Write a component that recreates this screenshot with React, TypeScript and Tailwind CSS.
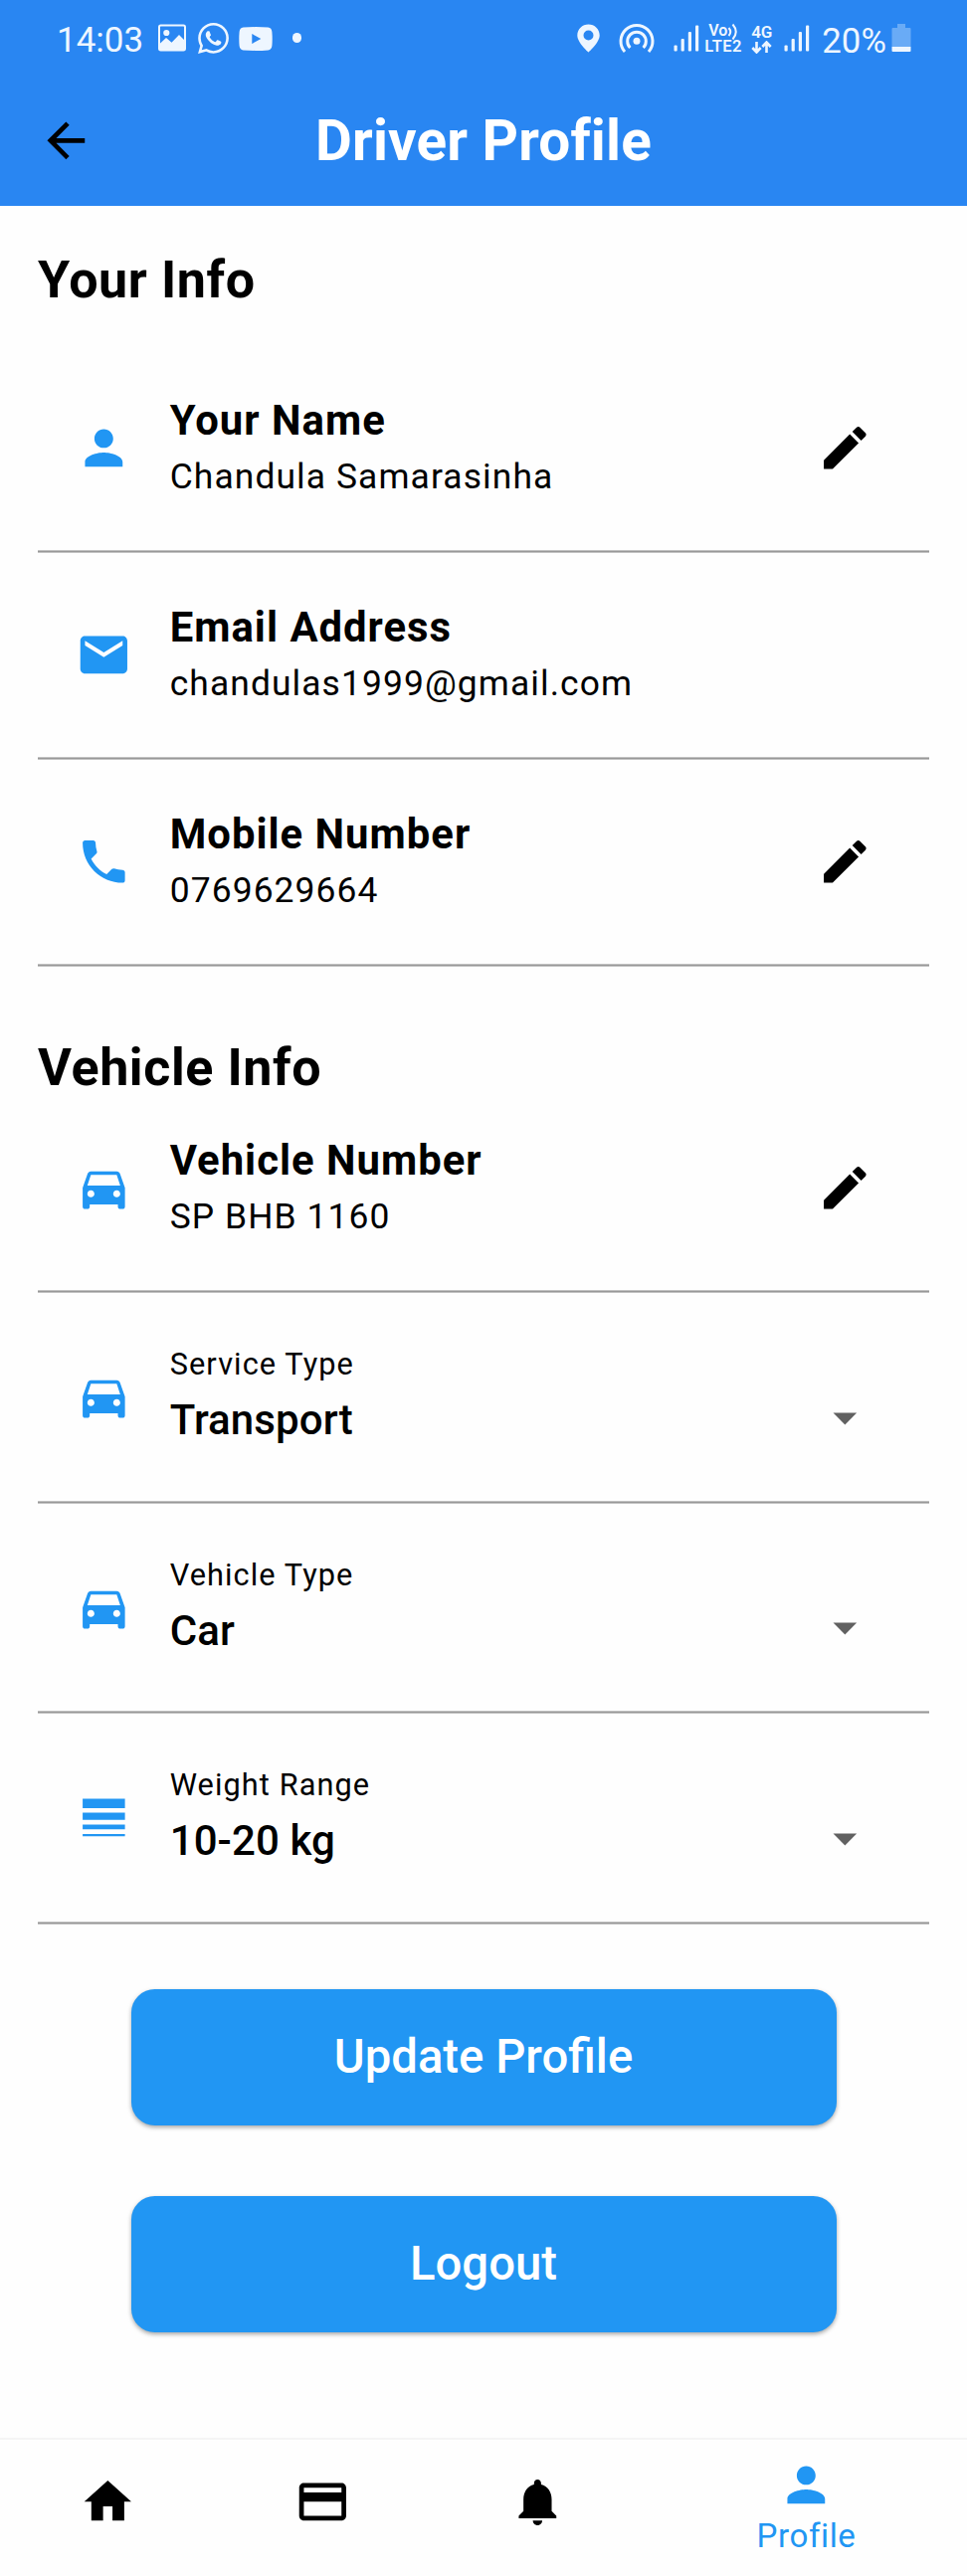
import React from "react";

type IconProps = { d: string; className?: string };

function Icon({ d, className = "" }: IconProps) {
  return (
    <svg viewBox="0 0 24 24" fill="currentColor" className={`size-[56.7px] shrink-0 ${className}`}>
      <path d={d} />
    </svg>
  );
}

const icons = {
  back: "M20 11H7.83l5.59-5.59L12 4l-8 8 8 8 1.41-1.41L7.83 13H20v-2z",
  person: "M12 12c2.21 0 4-1.79 4-4s-1.79-4-4-4-4 1.79-4 4 1.79 4 4 4zm0 2c-2.67 0-8 1.34-8 4v2h16v-2c0-2.66-5.33-4-8-4z",
  email: "M20 4H4c-1.1 0-1.99.9-1.99 2L2 18c0 1.1.9 2 2 2h16c1.1 0 2-.9 2-2V6c0-1.1-.9-2-2-2zm0 4l-8 5-8-5V6l8 5 8-5v2z",
  phone: "M6.62 10.79c1.44 2.83 3.76 5.14 6.59 6.59l2.2-2.2c.27-.27.67-.36 1.02-.24 1.12.37 2.33.57 3.57.57.55 0 1 .45 1 1V20c0 .55-.45 1-1 1-9.39 0-17-7.61-17-17 0-.55.45-1 1-1h3.5c.55 0 1 .45 1 1 0 1.25.2 2.45.57 3.57.11.35.03.74-.25 1.02l-2.2 2.2z",
  edit: "M3 17.25V21h3.75L17.81 9.94l-3.75-3.75L3 17.25zM20.71 7.04c.39-.39.39-1.02 0-1.41l-2.34-2.34c-.39-.39-1.02-.39-1.41 0l-1.83 1.83 3.75 3.75 1.83-1.83z",
  car: "M18.92 6.01C18.72 5.42 18.16 5 17.5 5h-11c-.66 0-1.21.42-1.42 1.01L3 12v8c0 .55.45 1 1 1h1c.55 0 1-.45 1-1v-1h12v1c0 .55.45 1 1 1h1c.55 0 1-.45 1-1v-8l-2.08-5.99zM6.5 16c-.83 0-1.5-.67-1.5-1.5S5.67 13 6.5 13s1.5.67 1.5 1.5S7.33 16 6.5 16zm11 0c-.83 0-1.5-.67-1.5-1.5s.67-1.5 1.5-1.5 1.5.67 1.5 1.5-.67 1.5-1.5 1.5zM5 11l1.5-4.5h11L19 11H5z",
  weight: "M3 17h18v-2H3v2zm0 3h18v-1H3v1zm0-7h18v-3H3v3zm0-9v4h18V4H3z",
  caret: "M7 10l5 5 5-5z",
  home: "M10 20v-6h4v6h5v-8h3L12 3 2 12h3v8z",
  card: "M20 4H4c-1.11 0-1.99.89-1.99 2L2 18c0 1.11.89 2 2 2h16c1.11 0 2-.89 2-2V6c0-1.11-.89-2-2-2zm0 14H4v-6h16v6zm0-10H4V6h16v2z",
  bell: "M12 22c1.1 0 2-.9 2-2h-4c0 1.1.89 2 2 2zm6-6v-5c0-3.07-1.64-5.64-4.5-6.32V4c0-.83-.67-1.5-1.5-1.5s-1.5.67-1.5 1.5v.68C7.63 5.36 6 7.92 6 11v5l-2 2v1h16v-1l-2-2z",
};

function Signal({ className = "" }: { className?: string }) {
  return (
    <svg viewBox="0 0 26 28" fill="currentColor" className={`h-7 w-[26px] shrink-0 ${className}`}>
      <rect x="0.5" y="20.5" width="3.2" height="6" rx="1" />
      <rect x="7.6" y="14" width="3.2" height="12.5" rx="1" />
      <rect x="14.8" y="7" width="3.2" height="19.5" rx="1" />
      <rect x="22" y="0.5" width="3.2" height="26" rx="1" />
    </svg>
  );
}

function StatusBar() {
  return (
    <div className="flex h-[78px] items-center pr-[56px] pl-[57px] text-[#eef6ff]">
      <span className="w-[100.5px] shrink-0 pt-[3px] text-[35px] leading-10">14:03</span>
      <svg viewBox="0 0 30 28" className="mb-[2px] h-7 w-[30px] shrink-0">
        <rect x="2" y="1.6" width="26" height="24.8" rx="1.6" fill="none" stroke="currentColor" strokeWidth="2" />
        <circle cx="9.3" cy="9" r="3.1" fill="currentColor" />
        <path d="M2 20.5l7-6.5 5.5 4.7 7.5-7.7 6 6V26H2z" fill="currentColor" />
      </svg>
      <svg viewBox="0 0 24 24" fill="currentColor" className="mb-[2px] ml-[11.5px] size-[31px] shrink-0">
        <path d="M17.472 14.382c-.297-.149-1.758-.867-2.03-.967-.273-.099-.471-.148-.67.15-.197.297-.767.966-.94 1.164-.173.199-.347.223-.644.075-.297-.15-1.255-.463-2.39-1.475-.883-.788-1.48-1.761-1.653-2.059-.173-.297-.018-.458.13-.606.134-.133.298-.347.446-.52.149-.174.198-.298.298-.497.099-.198.05-.371-.025-.52-.075-.149-.669-1.612-.916-2.207-.242-.579-.487-.5-.669-.51-.173-.008-.371-.01-.57-.01-.198 0-.52.074-.792.372-.272.297-1.04 1.016-1.04 2.479 0 1.462 1.065 2.875 1.213 3.074.149.198 2.096 3.2 5.077 4.487.709.306 1.262.489 1.694.625.712.227 1.36.195 1.871.118.571-.085 1.758-.719 2.006-1.413.248-.694.248-1.289.173-1.413-.074-.124-.272-.198-.57-.347m-5.421 7.403h-.004a9.87 9.87 0 01-5.031-1.378l-.361-.214-3.741.982.998-3.648-.235-.374a9.86 9.86 0 01-1.51-5.26c.001-5.45 4.436-9.884 9.888-9.884 2.64 0 5.122 1.03 6.988 2.898a9.825 9.825 0 012.893 6.994c-.003 5.45-4.437 9.884-9.885 9.884m8.413-18.297A11.815 11.815 0 0012.05 0C5.495 0 .16 5.335.157 11.892c0 2.096.547 4.142 1.588 5.945L.057 24l6.305-1.654a11.882 11.882 0 005.683 1.448h.005c6.554 0 11.89-5.335 11.893-11.893a11.821 11.821 0 00-3.48-8.413Z" />
      </svg>
      <svg viewBox="0 0 34 24" className="mb-px ml-[9.5px] h-6 w-[34px] shrink-0">
        <path fillRule="evenodd" fill="currentColor" d="M4.5.6Q17-.4 29.5.6 33 1 33.4 5q.6 7 0 14-.4 4-3.900 4.400-12.500 1-25 0Q1 23 .6 19 0 12 .6 5 1 1 4.500.6zM13.300 7v10l9-5z" />
      </svg>
      <span className="mb-[2px] ml-[20px] size-[9.5px] shrink-0 rounded-full bg-current" />

      <svg viewBox="0 0 23 29" className="mb-[2px] ml-auto h-[29px] w-[23px] shrink-0">
        <path fillRule="evenodd" fill="currentColor" d="M11.500.5C5.300.5.3 5.400.3 11.500c0 7.500 11.200 17 11.200 17s11.200-9.500 11.200-17c0-6.100-5-11-11.200-11zm0 6a5 5 0 110 10 5 5 0 010-10z" />
      </svg>
      <svg viewBox="0 0 36 30" fill="none" stroke="currentColor" strokeWidth="3" className="mb-[3px] ml-[19px] h-[30px] w-9 shrink-0">
        <path d="M6 29A16 16 0 1 1 30 29" />
        <path d="M11.4 25A9.3 9.3 0 1 1 24.6 25" />
        <circle cx="18" cy="18.3" r="3.5" fill="currentColor" stroke="none" />
      </svg>
      <Signal className="ml-[19.5px]" />
      <span className="mb-px ml-[5px] flex w-[39px] shrink-0 flex-col text-[16.5px] leading-[15.5px] font-semibold">
        <span className="flex pl-[4px] text-[16px]">
          Vo
          <svg viewBox="0 0 10 18" fill="none" stroke="currentColor" strokeWidth="2" className="-mb-[4px] h-[18px] w-[10px]">
            <path d="M1.5 5q3.5 4 0 8M5.5 1.5q6.5 7.5 0 15" />
          </svg>
        </span>
        <span className="tracking-[0.4px]">LTE2</span>
      </span>
      <span className="ml-[7px] flex w-[23px] shrink-0 flex-col items-center text-[17px] leading-[16px] font-semibold">
        4G
        <svg viewBox="0 0 21 13" fill="none" stroke="currentColor" strokeWidth="2.6" className="mt-px h-[13px] w-[21px]">
          <path d="M5.5 1v10M1.3 7l4.2 4.5L9.7 7M15.5 12V2M11.3 6l4.2-4.5L19.7 6" />
        </svg>
      </span>
      <Signal className="ml-[11px]" />
      <span className="ml-[12px] w-[69.7px] shrink-0 pt-[3px] text-[34.8px] leading-10">20%</span>
      <svg viewBox="0 0 20 30" fill="currentColor" className="-mt-[3px] h-[30px] w-5 shrink-0">
        <path opacity=".33" d="M6 1h8v4h4.5q1 0 1 1v18H.5V6q0-1 1-1H6z" />
        <path d="M.5 24h19v4q0 1-1 1h-17q-1 0-1-1z" />
      </svg>
    </div>
  );
}

function Heading({ children, className = "" }: { children: React.ReactNode; className?: string }) {
  return (
    <h2 className={`text-[52px] leading-[60px] font-bold tracking-[0.6px] ${className}`}>{children}</h2>
  );
}

function Divider() {
  return <div className="h-[3px] border-y border-[#c2c2c2] bg-[#989898]" />;
}

function InfoRow({ icon, label, value, editable = false }: { icon: string; label: string; value: string; editable?: boolean }) {
  return (
    <div>
      <div className="flex h-[205px] items-center pr-[56.5px] pl-[37.8px]">
        <Icon d={icon} className="text-[#2196f3]" />
        <div className="ml-[38.2px] flex-1 pb-[2px]">
          <div className="text-[41.8px] leading-[50px] font-bold tracking-[1.02px]">{label}</div>
          <div className="mt-[9px] text-[35.4px] leading-[44px] tracking-[1.1px]">{value}</div>
        </div>
        {editable && <Icon d={icons.edit} />}
      </div>
      <Divider />
    </div>
  );
}

function SelectRow({ icon, label, value }: { icon: string; label: string; value: string }) {
  return (
    <div>
      <div className="flex h-[208.6px] items-center pr-[56.5px] pl-[37.8px]">
        <Icon d={icon} className="text-[#2196f3]" />
        <div className="ml-[38.2px] flex-1 pb-[2px]">
          <div className="text-[30.7px] leading-[40px] tracking-[1.1px]">{label}</div>
          <div className="mt-[10px] flex items-center justify-between text-[42px] leading-[52px] font-medium tracking-[0.1px]">
            {value}
            <Icon d={icons.caret} className="-mt-[10.4px] -mb-[4px] text-[#616161]" />
          </div>
        </div>
      </div>
      <Divider />
    </div>
  );
}

function ActionButton({ children }: { children: React.ReactNode }) {
  return (
    <button className="h-[137px] w-[709px] rounded-[23.6px] bg-[#2196f3] text-[47.25px] leading-[56px] font-medium text-white shadow-[0_2px_4px_rgba(0,0,0,0.35)]">
      {children}
    </button>
  );
}

export default function App() {
  return (
    <div className="flex h-[2590px] w-[972px] flex-col bg-[#fefefe] font-['Roboto',sans-serif] text-black">
      <header className="h-[207px] bg-[#2986f2]">
        <StatusBar />
        <div className="grid h-[126px] grid-cols-[1fr_auto_1fr] items-center">
          <Icon d={icons.back} className="ml-[38.3px]" />
          <h1 className="pt-[2px] text-[56.7px] leading-[64px] font-bold tracking-[0.15px] text-white">Driver Profile</h1>
        </div>
      </header>

      <main className="px-[38px]">
        <Heading className="mt-[45px]">Your Info</Heading>
        <section className="mt-[36px]">
          <InfoRow icon={icons.person} label="Your Name" value="Chandula Samarasinha" editable />
          <InfoRow icon={icons.email} label="Email Address" value="chandulas1999@gmail.com" />
          <InfoRow icon={icons.phone} label="Mobile Number" value="0769629664" editable />
        </section>
        <Heading className="mt-[72px]">Vehicle Info</Heading>
        <section className="-mt-[12px]">
          <InfoRow icon={icons.car} label="Vehicle Number" value="SP BHB 1160" editable />
          <SelectRow icon={icons.car} label="Service Type" value="Transport" />
          <SelectRow icon={icons.car} label="Vehicle Type" value="Car" />
          <SelectRow icon={icons.weight} label="Weight Range" value="10-20 kg" />
        </section>
        <div className="mt-[65.2px] flex flex-col items-center gap-[71px]">
          <ActionButton>Update Profile</ActionButton>
          <ActionButton>Logout</ActionButton>
        </div>
      </main>

      <nav className="mt-auto grid h-[139px] grid-cols-[216px_216px_216px_324px] border-t-2 border-[#f5f5f5]">
        <div className="flex justify-center pt-[33.5px]"><Icon d={icons.home} /></div>
        <div className="flex justify-center pt-[33.5px]"><Icon d={icons.card} /></div>
        <div className="flex justify-center pt-[33.5px]"><Icon d={icons.bell} /></div>
        <div className="flex flex-col items-center pt-[16.5px] text-[#2196f3]">
          <Icon d={icons.person} />
          <span className="mt-[5px] pl-px text-[33.1px] leading-[38px] tracking-[0.6px]">Profile</span>
        </div>
      </nav>
    </div>
  );
}
